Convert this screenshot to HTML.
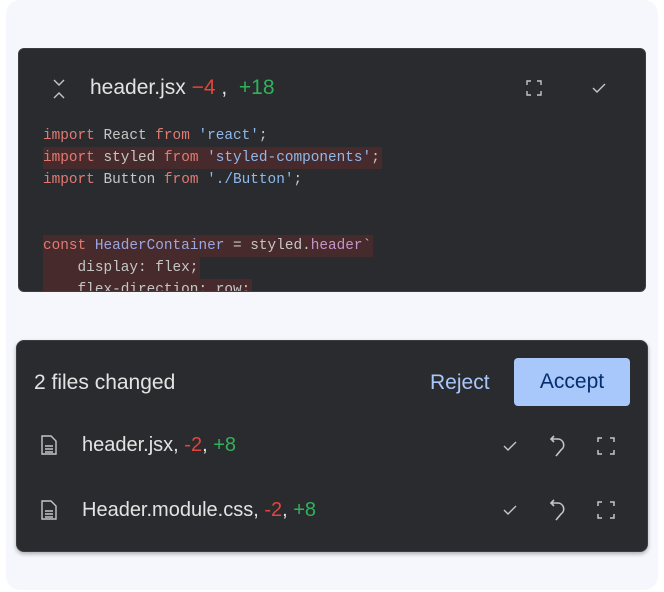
<!DOCTYPE html>
<html><head><style>
body{margin:0;width:664px;height:592px;background:#fff;font-family:"Liberation Sans",sans-serif;position:relative;overflow:hidden}
.outer{position:absolute;left:6px;top:0;width:652px;height:590px;background:#f6f7fc;border-radius:14px}
.card1{position:absolute;left:18px;top:48px;width:626px;height:242px;background:#2a2b2e;border:1px solid #3c3d40;border-radius:6px;overflow:hidden}
.card2{position:absolute;left:16px;top:340px;width:630px;height:210px;background:#2a2b2e;border:1px solid #3c3d40;border-radius:8px;box-shadow:0 2px 4px rgba(0,0,0,.3)}
.t{position:absolute;white-space:pre}
.code{position:absolute;left:24px;font-family:"Liberation Mono",monospace;font-size:14.4px;line-height:22px;color:#c4c7c5}
.ln{height:22px;white-space:pre}
.hl{background:#472a2c;display:inline-block;padding-right:2px}
.k{color:#e27a72}.s{color:#8fb8ea}.p{color:#c595c8}.v{color:#9aa6e0}
.red{color:#e2453c}.grn{color:#2fb35a}
svg{position:absolute}
</style></head><body>
<div class="outer"></div>
<div class="card1">
<svg style="left:32px;top:30px" width="16" height="20" viewBox="0 0 16 20" fill="none" stroke="#c4c7c5" stroke-width="1.4"><path d="M3 1l5 5 5-5M3 19l5-5 5 5"/></svg>
<div class="t" style="left:71px;top:27px;font-size:21px;color:#e3e3e3">header.jsx <span class="red">−4</span> ,  <span class="grn">+18</span></div>
<svg style="left:507px;top:31px" width="16" height="16" viewBox="0 0 16 16" fill="none" stroke="#c4c7c5" stroke-width="1.4"><path d="M1 5V1h4M11 1h4v4M15 11v4h-4M5 15H1v-4"/></svg>
<svg style="left:572px;top:33px" width="16" height="12" viewBox="0 0 16 12" fill="none" stroke="#c4c7c5" stroke-width="1.4"><path d="M2 6l4 4 8-8"/></svg>
<div class="code" style="top:76px"><div class="ln"><span class="k">import</span> React <span class="k">from</span> <span class="s">'react'</span>;</div><div class="ln"><span class="hl"><span class="k">import</span> styled <span class="k">from</span> <span class="s">'styled-components'</span>;</span></div><div class="ln"><span class="k">import</span> Button <span class="k">from</span> <span class="s">'./Button'</span>;</div><div class="ln"></div><div class="ln"></div><div class="ln"><span class="hl"><span class="k">const</span> <span class="v">HeaderContainer</span> = styled.<span class="p">header</span>`</span></div><div class="ln"><span class="hl">    display: flex;</span></div><div class="ln"><span class="hl">    flex-direction: row;</span></div></div>
</div>
<div class="card2">
<div class="t" style="left:17px;top:30px;font-size:21px;color:#e3e3e3">2 files changed</div>
<div class="t" style="left:413px;top:30px;font-size:21px;color:#a8c7fa">Reject</div>
<div style="position:absolute;left:497px;top:17px;width:116px;height:48px;background:#a8c7fa;border-radius:4px;color:#062e6f;font-size:21px;text-align:center;line-height:48px">Accept</div>
<svg style="left:24px;top:94px" width="16" height="20" viewBox="0 0 16 20" fill="none" stroke="#c4c7c5" stroke-width="1.4"><path d="M1 1h9l5 5v13H1z M4 11h8M4 14h8M4 17h8"/></svg>
<div class="t" style="left:65px;top:93px;font-size:20px;color:#e3e3e3">header.jsx, <span class="red">-2</span>, <span class="grn">+8</span></div>
<svg style="left:24px;top:159px" width="16" height="20" viewBox="0 0 16 20" fill="none" stroke="#c4c7c5" stroke-width="1.4"><path d="M1 1h9l5 5v13H1z M4 11h8M4 14h8M4 17h8"/></svg>
<div class="t" style="left:65px;top:158px;font-size:20px;color:#e3e3e3">Header.module.css, <span class="red">-2</span>, <span class="grn">+8</span></div>
<svg style="left:485px;top:99px" width="16" height="12" viewBox="0 0 16 12" fill="none" stroke="#c4c7c5" stroke-width="1.4"><path d="M2 6l4 4 8-8"/></svg>
<svg style="left:485px;top:163px" width="16" height="12" viewBox="0 0 16 12" fill="none" stroke="#c4c7c5" stroke-width="1.4"><path d="M2 6l4 4 8-8"/></svg>
<svg style="left:531px;top:93px" width="20" height="24" viewBox="0 0 20 24" fill="none" stroke="#c4c7c5" stroke-width="1.6"><path d="M6 2L3 5l3 3M3 5h7a6 6 0 0 1 3 11L8 22"/></svg>
<svg style="left:531px;top:157px" width="20" height="24" viewBox="0 0 20 24" fill="none" stroke="#c4c7c5" stroke-width="1.6"><path d="M6 2L3 5l3 3M3 5h7a6 6 0 0 1 3 11L8 22"/></svg>
<svg style="left:580px;top:96px" width="18" height="18" viewBox="0 0 18 18" fill="none" stroke="#c4c7c5" stroke-width="1.5"><path d="M1 5V1h4M13 1h4v4M17 13v4h-4M5 17H1v-4"/></svg>
<svg style="left:580px;top:160px" width="18" height="18" viewBox="0 0 18 18" fill="none" stroke="#c4c7c5" stroke-width="1.5"><path d="M1 5V1h4M13 1h4v4M17 13v4h-4M5 17H1v-4"/></svg>
</div>
</body></html>
